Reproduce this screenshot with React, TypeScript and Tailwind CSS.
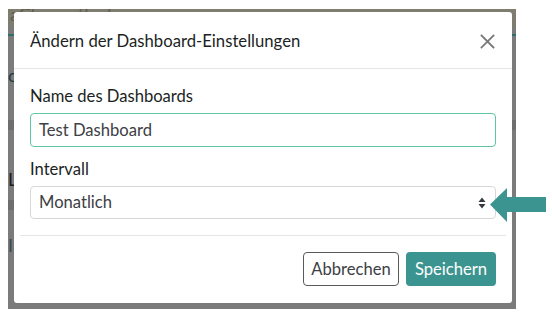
import React from "react";

export default function App() {
  return (
    <div
      className="relative w-[552px] h-[316px] bg-white overflow-hidden"
      style={{ fontFamily: "Lato, 'Open Sans', sans-serif" }}
    >
      {/* dimmed page behind the dialog */}
      <div className="absolute left-[8px] top-[9px] w-[508px] h-[300px] bg-[#7b7b7b] overflow-hidden">
        <div className="h-[26px] bg-[#7e7d6f] text-[18px] leading-[26px] text-[#5e5e52] pl-[2px] -mt-[8px]">
          aChancetly.de
        </div>
        <div className="h-[2px] bg-[#2f6e6b] mt-[7px]"></div>
        <div className="h-[84px] bg-[#7b7b7b] text-[18px] text-[#1f3c44] pt-[26px]">o</div>
        <div className="h-[10px] bg-[#6e6e6e]"></div>
        <div className="h-[70px] text-[18px] text-[#1e1e1e] pt-[36px]">L</div>
        <div className="h-[10px] bg-[#6e6e6e]"></div>
        <div className="text-[18px] text-[#3a4a55] pt-[22px]">Ir</div>
      </div>

      {/* modal */}
      <div className="absolute left-[14px] top-[12px] w-[498px] h-[291px] bg-white rounded-[3px] flex flex-col text-[#1c1f24]">
        <div className="h-[57px] flex items-center justify-between pl-[16px] pr-[17px] border-b border-[#e6e6e6]">
          <div className="text-[16.7px] leading-[24px] pt-[2px]">Ändern der Dashboard-Einstellungen</div>
          <svg width="15" height="15" viewBox="0 0 15 15" className="mt-[2px]">
            <path d="M1.5 1.5 L13.5 13.5 M13.5 1.5 L1.5 13.5" stroke="#7a7a7a" strokeWidth="1.8" strokeLinecap="square" />
          </svg>
        </div>

        <div className="px-[16px] pt-[15px] pb-[16px] flex flex-col">
          <div className="text-[16.6px] leading-[24px]">Name des Dashboards</div>
          <div className="mt-[5px] h-[34px] rounded-[4px] border border-[#5cc7a0] flex items-center pl-[8px] text-[16.6px] text-[#3d4044]">
            Test Dashboard
          </div>
          <div className="mt-[10px] text-[16.6px] leading-[24px]">Intervall</div>
          <div className="mt-[5px] h-[33px] rounded-[4px] border border-[#d6d8db] flex items-center justify-between pl-[8px] pr-[9px] text-[16.6px] text-[#3d4044]">
            <span>Monatlich</span>
            <svg width="8" height="12" viewBox="0 0 8 12">
              <path d="M4 0.5 L7.5 5 L0.5 5 Z" fill="#343a40" />
              <path d="M0.5 7 L7.5 7 L4 11.5 Z" fill="#343a40" />
            </svg>
          </div>
        </div>

        <div className="mx-[6px] border-t border-[#e6e6e6]"></div>

        <div className="flex justify-end gap-[7px] pt-[16px] pr-[16px]">
          <button className="h-[34px] w-[96px] rounded-[4px] border border-[#5a5a5a] bg-white text-[16.6px] text-[#3d4044]">
            Abbrechen
          </button>
          <button className="h-[34px] w-[90px] rounded-[4px] bg-[#3b9490] text-white text-[16.6px]">
            Speichern
          </button>
        </div>
      </div>

      {/* pointer arrow */}
      <svg className="absolute left-[490px] top-[188px]" width="58" height="35" viewBox="0 0 58 35">
        <path d="M0 16.5 L17 0 L17 9 L56 9 L56 24 L17 24 L17 34 Z" fill="#3b9490" />
      </svg>
    </div>
  );
}
